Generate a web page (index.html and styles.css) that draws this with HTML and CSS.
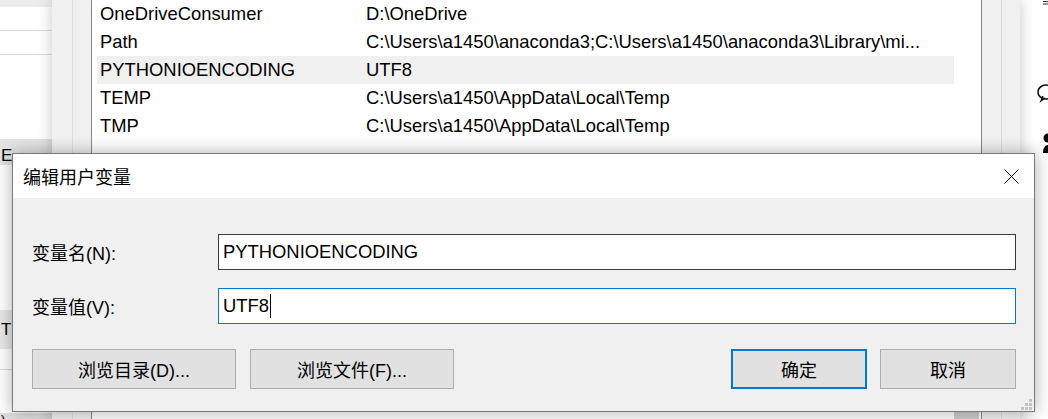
FILE: index.html
```html
<!DOCTYPE html>
<html lang="zh-CN">
<head>
<meta charset="utf-8">
<title>编辑用户变量</title>
<link rel="stylesheet" href="styles.css">
</head>
<body>
<div class="desk">
  <div class="side-win">
    <div class="sw-top"></div>
    <div class="sw-row"></div>
    <div class="sw-row"></div>
    <div class="sw-gap1"></div>
    <div class="sw-band1"><span class="frag">E</span></div>
    <div class="sw-gap2"></div>
    <div class="sw-band2"><span class="frag">T</span></div>
    <div class="sw-row2"></div>
    <div class="sw-band3"><span class="frag small">)</span></div>
  </div>

  <div class="env-win">
    <div class="group">
      <div class="listbox">
        <div class="rows">
          <div class="row"><span class="name">OneDriveConsumer</span><span class="val">D:\OneDrive</span></div>
          <div class="row"><span class="name">Path</span><span class="val">C:\Users\a1450\anaconda3;C:\Users\a1450\anaconda3\Library\mi...</span></div>
          <div class="row sel"><span class="name">PYTHONIOENCODING</span><span class="val">UTF8</span></div>
          <div class="row"><span class="name">TEMP</span><span class="val">C:\Users\a1450\AppData\Local\Temp</span></div>
          <div class="row"><span class="name">TMP</span><span class="val">C:\Users\a1450\AppData\Local\Temp</span></div>
        </div>
        <div class="scrollcol"><div class="thumb"></div></div>
      </div>
    </div>
  </div>

  <svg class="tray" width="28" height="160" viewBox="0 0 28 160">
    <path d="M23 1.5h5M23 4h5" stroke="#333" stroke-width="1"/>
    <path d="M29 85.5a8 7 0 1 0 0 13" fill="none" stroke="#111" stroke-width="1.6"/>
    <path d="M23 96l-2 5 4-3" fill="none" stroke="#111" stroke-width="1.4"/>
    <circle cx="28" cy="138" r="4.5" fill="#000"/>
    <path d="M23 153c0-5 2-8 5-8v8z" fill="#000"/>
  </svg>

  <div class="dialog">
    <div class="titlebar">
      <span class="title">编辑用户变量</span>
      <span class="close">
        <svg width="15" height="15" viewBox="0 0 15 15"><path d="M0.5 0.5L14.5 14.5M14.5 0.5L0.5 14.5" stroke="#000" stroke-width="1"/></svg>
      </span>
    </div>
    <div class="dbody">
      <div class="field">
        <label class="flabel">变量名(N):</label>
        <div class="input"><span class="itext">PYTHONIOENCODING</span></div>
      </div>
      <div class="field field2">
        <label class="flabel">变量值(V):</label>
        <div class="input focus"><span class="itext">UTF8</span><span class="caret"></span></div>
      </div>
      <div class="buttons">
        <div class="btn wide">浏览目录(D)...</div>
        <div class="btn wide">浏览文件(F)...</div>
        <div class="spacer"></div>
        <div class="btn narrow default">确定</div>
        <div class="btn narrow">取消</div>
      </div>
    </div>
    <svg class="grip" width="12" height="12" viewBox="0 0 12 12">
      <rect x="9" y="1" width="3" height="3" fill="#c4c4c4"/>
      <rect x="5" y="5" width="3" height="3" fill="#c4c4c4"/>
      <rect x="9" y="5" width="3" height="3" fill="#c4c4c4"/>
      <rect x="1" y="9" width="3" height="3" fill="#c4c4c4"/>
      <rect x="5" y="9" width="3" height="3" fill="#c4c4c4"/>
      <rect x="9" y="9" width="3" height="3" fill="#c4c4c4"/>
    </svg>
  </div>
</div>
</body>
</html>
```

FILE: styles.css
```css
* { box-sizing: border-box; }
html, body { margin: 0; padding: 0; }
body {
  width: 1048px;
  height: 419px;
  overflow: hidden;
  background: #fff;
  font-family: "Liberation Sans", "Noto Sans CJK SC", sans-serif;
  font-size: 18px;
  color: #000;
}
.desk { position: relative; width: 1048px; height: 419px; overflow: hidden; background: #fff; }

/* left background window */
.side-win {
  position: absolute; left: 0; top: 0; width: 52px; height: 419px;
  background: #fff; display: flex; flex-direction: column;
  font-size: 17px;
}
.sw-top { height: 7px; background: #ececec; flex: none; }
.sw-row { height: 24px; border-bottom: 1px solid #d9d9d9; flex: none; }
.sw-row:first-of-type { height: 21px; }
.sw-gap1 { height: 84px; flex: none; }
.sw-band1 { height: 26px; background: #e4e4e4; flex: none; display: flex; align-items: flex-end; }
.sw-gap2 { height: 145px; flex: none; }
.sw-band2 { height: 39px; background: #e8e8e8; flex: none; display: flex; align-items: center; }
.sw-row2 { height: 44px; border-top: 1px solid #d9d9d9; margin-top: 20px; flex: none; }
.sw-band3 { flex: 1; background: #e0e0e0; display: flex; align-items: flex-end; padding-bottom: 3px; }
.frag { padding-left: 1px; line-height: 18px; }
.frag.small { font-size: 13px; line-height: 14px; }

/* environment variables window */
.env-win {
  position: absolute; left: 52px; top: 0; width: 968px; height: 430px;
  background: #f0f0f0;
  padding: 0 18px 0 20px;
  box-shadow: 0 0 14px rgba(0,0,0,0.22);
  display: flex;
}
.group {
  flex: 1;
  border-left: 1px solid #dcdcdc;
  border-right: 1px solid #dcdcdc;
  padding: 0 19px 0 18px;
  display: flex;
}
.listbox {
  flex: 1;
  background: #fff;
  border-left: 1px solid #828790;
  border-right: 1px solid #828790;
  display: flex;
  height: 430px;
}
.rows { width: 857px; margin-left: 5px; flex: none; font-size: 18.4px; }
.row { height: 28px; display: flex; align-items: center; padding-left: 3px; white-space: nowrap; }
.row.sel { background: #f0f0f0; }
.name { width: 266px; flex: none; }
.val { flex: none; }
.scrollcol { flex: 1; padding-top: 412px; padding-right: 2px; }
.thumb { height: 20px; background: #cdcdcd; }

.tray { position: absolute; left: 1020px; top: 0; }

/* edit dialog */
.dialog {
  position: absolute; left: 12px; top: 153px;
  width: 1023px; height: 259px;
  border: 1px solid #7a7a7a;
  background: #f0f0f0;
  box-shadow: 0 0 16px rgba(0,0,0,0.32);
  display: flex; flex-direction: column;
}
.titlebar {
  height: 44px; flex: none; background: #fff;
  display: flex; align-items: center; padding-left: 10px;
}
.title { font-size: 18px; }
.close {
  margin-left: auto; width: 46px; height: 44px;
  display: flex; align-items: center; justify-content: center;
}
.close svg { display: block; }
.dbody { flex: 1; padding: 36px 18px 0 19px; }
.field { display: flex; align-items: center; height: 36px; }
.field2 { margin-top: 18px; }
.flabel { width: 186px; flex: none; }
.input {
  flex: 1; height: 36px; background: #fff;
  border: 1px solid #3a3a3a;
  display: flex; align-items: center; padding-left: 4px;
  font-size: 18.4px;
}
.input.focus { border-color: #0078d7; }
.caret { display: inline-block; width: 1px; height: 24px; background: #000; margin-left: 1px; }
.buttons { display: flex; margin-top: 25px; gap: 14px; }
.spacer { flex: 1; }
.btn {
  height: 40px; background: #e1e1e1; border: 1px solid #adadad;
  display: flex; align-items: center; justify-content: center;
}
.btn.wide { width: 204px; }
.btn.narrow { width: 136px; }
.btn.default { border: 2px solid #0078d7; margin-right: -1px; }
.grip { position: absolute; right: 2px; bottom: 1px; }
```
